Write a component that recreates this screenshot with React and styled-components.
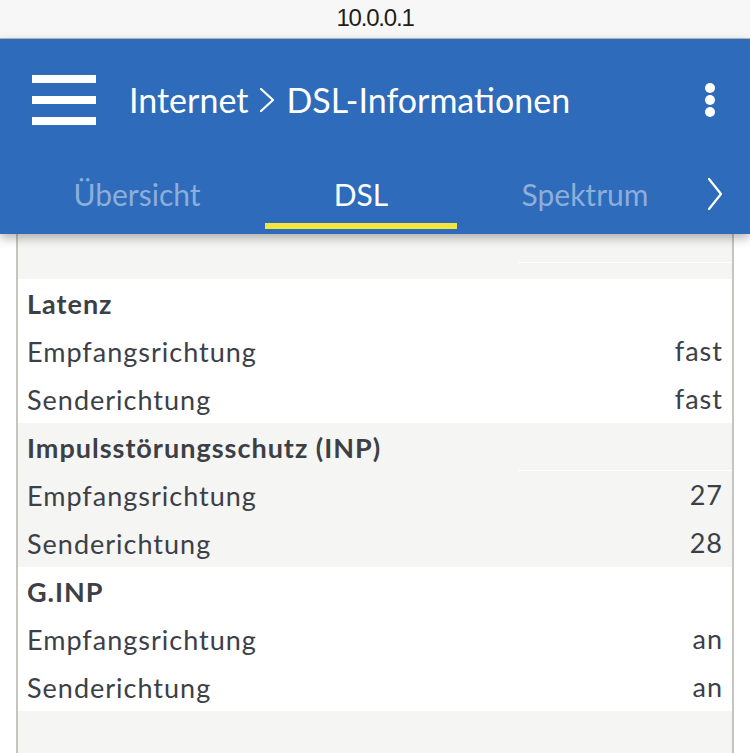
import React from 'react';
import styled, { createGlobalStyle } from 'styled-components';

const colors = {
  blue: '#2e6bba',
  tabInactive: '#8caedb',
  yellow: '#f4e53f',
  text: '#3c4046',
  stripe: '#f5f5f3',
  border: '#c6c6be',
};

const GlobalStyle = createGlobalStyle`
  html, body {
    margin: 0;
    padding: 0;
    background: #ffffff;
    font-family: Lato, "Noto Sans", sans-serif;
  }
`;

const StyledPage = styled.div`
  width: 750px;
  height: 753px;
  overflow: hidden;
  display: flex;
  flex-direction: column;
`;

const StyledAddressBar = styled.div`
  height: 39px;
  flex-shrink: 0;
  background: #f7f7f7;
  border-bottom: 1px solid #b9b9b9;
  display: flex;
  align-items: center;
  justify-content: center;
  padding-bottom: 3px;
  box-sizing: border-box;
  font-family: "Liberation Sans", sans-serif;
  font-size: 24px;
  color: #1e1e1e;
  letter-spacing: -1.2px;
`;

const StyledHeader = styled.header`
  position: relative;
  z-index: 1;
  flex-shrink: 0;
  height: 195px;
  background: ${colors.blue};
  box-shadow: 0 4px 10px rgba(0, 0, 0, 0.3);
  display: flex;
  flex-direction: column;
`;

const StyledTitleBar = styled.div`
  height: 121px;
  display: flex;
  align-items: center;
  padding: 0 30px 0 32px;
`;

const StyledBurger = styled.div`
  width: 64px;
  display: flex;
  flex-direction: column;
  gap: 13px;
  margin-top: 1px;

  span {
    display: block;
    height: 8px;
    background: #ffffff;
  }
`;

const StyledTitle = styled.h1`
  flex: 1;
  margin: 0 0 0 33px;
  display: flex;
  align-items: center;
  gap: 11px;
  font-size: 34px;
  font-weight: 400;
  color: #ffffff;
  white-space: nowrap;
`;

const StyledKebab = styled.div`
  display: flex;
  flex-direction: column;
  gap: 2px;
  margin-right: 5px;

  span {
    width: 10px;
    height: 10px;
    border-radius: 50%;
    background: #ffffff;
  }
`;

const StyledTabs = styled.nav`
  flex: 1;
  display: flex;
  align-items: stretch;
  gap: 32px;
  padding-left: 41px;
`;

const StyledTab = styled.div`
  width: 192px;
  display: flex;
  align-items: center;
  justify-content: center;
  padding-top: 4px;
  font-size: 30px;
  color: ${(p) => (p.$active ? '#ffffff' : colors.tabInactive)};
  border-bottom: 6px solid ${(p) => (p.$active ? colors.yellow : 'transparent')};
  margin-bottom: 5px;
`;

const StyledTabArrow = styled.div`
  display: flex;
  align-items: center;
  margin-left: -6px;
  padding-bottom: 6px;
`;

const StyledContent = styled.main`
  flex: 1;
  margin: 0 16px;
  border-left: 2px solid ${colors.border};
  border-right: 2px solid ${colors.border};
  display: flex;
  flex-direction: column;
`;

const StyledGroup = styled.section`
  background: ${(p) => (p.$striped ? colors.stripe : '#ffffff')};
`;

const StyledRow = styled.div`
  height: ${(p) => p.$height || 48}px;
  display: grid;
  grid-template-columns: 500px 1fr;
  color: ${colors.text};
  font-size: 27px;
  letter-spacing: 1px;
`;

const StyledLabel = styled.div`
  display: flex;
  align-items: center;
  padding-left: 9px;
  font-weight: ${(p) => (p.$heading ? 700 : 400)};
  white-space: nowrap;
`;

const StyledValue = styled.div`
  display: flex;
  align-items: center;
  justify-content: flex-end;
  padding-right: 9px;
  border-bottom: 1px solid ${(p) => (p.$divider ? '#ffffff' : 'transparent')};
  box-sizing: border-box;
`;

const Chevron = ({ width, height, stroke }) => (
  <svg width={width} height={height} viewBox={`0 0 ${width} ${height}`} fill="none">
    <polyline
      points={`2,2 ${width - 2},${height / 2} 2,${height - 2}`}
      stroke="#ffffff"
      strokeWidth={stroke}
      strokeLinecap="round"
      strokeLinejoin="round"
    />
  </svg>
);

const groups = [
  {
    title: 'Latenz',
    rows: [
      ['Empfangsrichtung', 'fast'],
      ['Senderichtung', 'fast'],
    ],
  },
  {
    title: 'Impulsstörungsschutz (INP)',
    striped: true,
    rows: [
      ['Empfangsrichtung', '27'],
      ['Senderichtung', '28'],
    ],
  },
  {
    title: 'G.INP',
    rows: [
      ['Empfangsrichtung', 'an'],
      ['Senderichtung', 'an'],
    ],
  },
];

const App = () => (
  <StyledPage>
    <GlobalStyle />
    <StyledAddressBar>10.0.0.1</StyledAddressBar>
    <StyledHeader>
      <StyledTitleBar>
        <StyledBurger>
          <span />
          <span />
          <span />
        </StyledBurger>
        <StyledTitle>
          Internet
          <Chevron width={16} height={26} stroke={2.2} />
          DSL-Informationen
        </StyledTitle>
        <StyledKebab>
          <span />
          <span />
          <span />
        </StyledKebab>
      </StyledTitleBar>
      <StyledTabs>
        <StyledTab>Übersicht</StyledTab>
        <StyledTab $active>DSL</StyledTab>
        <StyledTab>Spektrum</StyledTab>
        <StyledTabArrow>
          <Chevron width={16} height={34} stroke={2.2} />
        </StyledTabArrow>
      </StyledTabs>
    </StyledHeader>
    <StyledContent>
      {/* tail of the previous group, scrolled under the header */}
      <StyledGroup $striped>
        <StyledRow $height={29}>
          <StyledLabel />
          <StyledValue $divider />
        </StyledRow>
        <StyledRow $height={16}>
          <StyledLabel />
          <StyledValue />
        </StyledRow>
      </StyledGroup>
      {groups.map((group) => (
        <StyledGroup key={group.title} $striped={group.striped}>
          <StyledRow>
            <StyledLabel $heading>{group.title}</StyledLabel>
            <StyledValue $divider />
          </StyledRow>
          {group.rows.map(([label, value]) => (
            <StyledRow key={label}>
              <StyledLabel>{label}</StyledLabel>
              <StyledValue>{value}</StyledValue>
            </StyledRow>
          ))}
        </StyledGroup>
      ))}
      <StyledGroup $striped>
        <StyledRow>
          <StyledLabel />
          <StyledValue />
        </StyledRow>
      </StyledGroup>
    </StyledContent>
  </StyledPage>
);

export default App;
